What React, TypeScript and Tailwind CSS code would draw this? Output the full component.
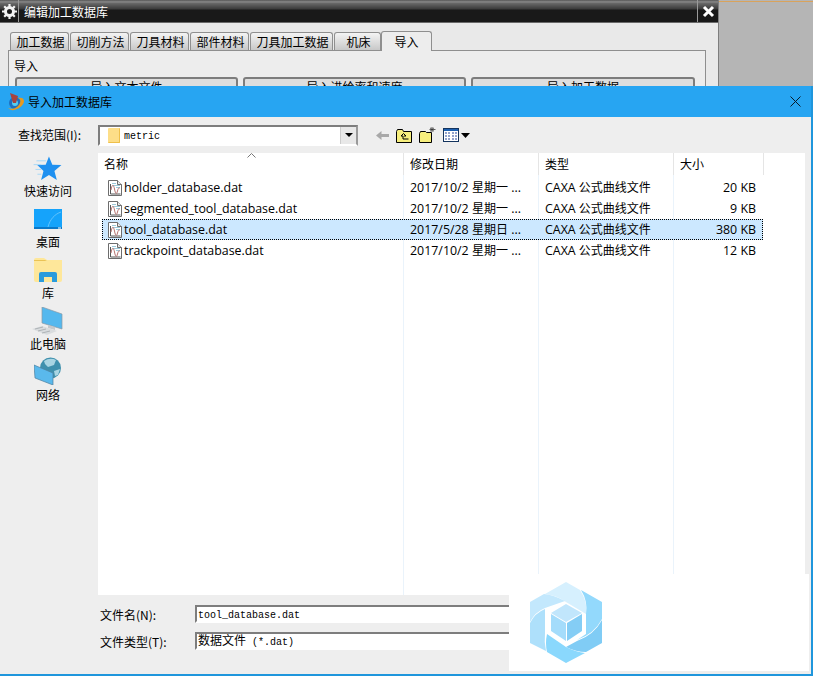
const cjk = "font-['Noto_Sans_CJK_SC','Noto_Sans',sans-serif]"
const ui = "font-['Open_Sans','Noto_Sans_CJK_SC',sans-serif]"
const mono = "font-['Liberation_Mono','Noto_Sans_CJK_SC',monospace]"

const tabs = [
    { label: "加工数据", w: "w-[59px]" },
    { label: "切削方法", w: "w-[59px]" },
    { label: "刀具材料", w: "w-[59px]" },
    { label: "部件材料", w: "w-[59px]" },
    { label: "刀具加工数据", w: "w-[83px]" },
    { label: "机床", w: "w-[47px]" },
]

const files = [
    { name: "holder_database.dat", date: "2017/10/2 ", day: "星期一", size: "20 KB" },
    { name: "segmented_tool_database.dat", date: "2017/10/2 ", day: "星期一", size: "9 KB" },
    { name: "tool_database.dat", date: "2017/5/28 ", day: "星期日", size: "380 KB", selected: true },
    { name: "trackpoint_database.dat", date: "2017/10/2 ", day: "星期一", size: "12 KB" },
]

function FileIcon() {
    return (
        <svg width="16" height="16" viewBox="0 0 16 16" className="shrink-0">
            <path d="M1.500.5h9l4 4v11h-13z" fill="#fff" stroke="#6d6d6d" />
            <path d="M10.500.5v4h4" fill="#e8e8e8" stroke="#6d6d6d" />
            <path d="M5 3.500h4M6 5.500h7M9 7.500h4" stroke="#9cc9d9" />
            <path d="M3.500 4v10h10" fill="none" stroke="#555" />
            <path d="M4 10c1-6 2.500-6 3.500-1s2 6 3 2 1.500-3 2.500-3" fill="none" stroke="#b5726f" />
        </svg>
    )
}

function GearIcon() {
    return (
        <svg width="15" height="15" viewBox="0 0 15 15">
            <circle cx="7.500" cy="7.500" r="4" fill="none" stroke="#f2f2f2" strokeWidth="3" />
            <path d="M7.500 0v3M7.500 12v3M0 7.500h3M12 7.500h3M2.200 2.200l2 2M10.800 10.800l2 2M12.800 2.200l-2 2M4.200 10.800l-2 2" stroke="#f2f2f2" strokeWidth="2.200" />
        </svg>
    )
}

function AppIcon() {
    return (
        <svg width="17" height="18" viewBox="0 0 17 18">
            <circle cx="8" cy="10" r="6" fill="#1f6fc0" />
            <circle cx="8" cy="10" r="3" fill="#58cdf0" />
            <path d="M3 0l8 3-2 7-3 0z" fill="#a8433f" />
            <path d="M1 15c4 2 10 0 12-5 1-3 0-4-2-5 3-1 6 0 6 3 0 5-8 10-13 9z" fill="#e99a1e" />
        </svg>
    )
}

function BackArrow() {
    return (
        <svg width="13" height="11" viewBox="0 0 13 11">
            <path d="M0 5.500 5.500 1v3H13v3H5.500v3z" fill="#a8a8a8" />
        </svg>
    )
}

function UpFolder() {
    return (
        <svg width="16" height="15" viewBox="0 0 16 15">
            <path d="M.5 3.500l1-2h5l1 2h8v11H.500z" fill="#f7ef7e" stroke="#000" />
            <path d="M7.500 5.500 5 8h2v3h5.500M7.500 5.500 10 8H8" fill="none" stroke="#000" />
        </svg>
    )
}

function NewFolder() {
    return (
        <svg width="17" height="16" viewBox="0 0 17 16">
            <path d="M.5 6.500l1-2h5l1 1h5v10H.500z" fill="#f7ef7e" stroke="#000" />
            <path d="M13 0v5M10.500 2.500h6M11 .8l4 3.500M15 .8l-4 3.500" stroke="#333" strokeWidth=".8" />
        </svg>
    )
}

function ViewIcon() {
    return (
        <svg width="27" height="14" viewBox="0 0 27 14">
            <rect x=".5" y=".5" width="15" height="13" fill="#fff" stroke="#14345e" />
            <rect x="1" y="1" width="14" height="2" fill="#1c5fb0" />
            <path d="M2 5h2M5 5h2M9 5h2M12 5h2M2 8h2M5 8h2M9 8h2M12 8h2M2 11h2M5 11h2M9 11h2M12 11h2" stroke="#26479b" />
            <path d="M18 5h9l-4.500 5z" fill="#000" />
        </svg>
    )
}

function StarIcon() {
    return (
        <svg width="30" height="24" viewBox="0 0 30 25">
            <path d="M16 .5l3.500 8.500 9.500.500-7.300 6 2.500 9.500-8.200-5.200-8.200 5.200 2.500-9.500-6.500-6 8.800-.500z" fill="#1e90f0" />
            <path d="M3 5h10M0 9h8M2 14h6M4 19h4" stroke="#a5d7f7" />
        </svg>
    )
}

function DesktopIcon() {
    return (
        <svg width="28" height="20" viewBox="0 0 28 20">
            <rect width="28" height="20" fill="#15a3fb" />
            <path d="M14 18C16 10 21 5 27 3" fill="none" stroke="#62c3fb" />
            <rect y="18" width="28" height="2" fill="#0a78c8" />
            <path d="M24 19h3" stroke="#fff" />
        </svg>
    )
}

function LibraryIcon() {
    return (
        <svg width="28" height="24" viewBox="0 0 28 24">
            <path d="M0 2q0-2 2-2h8l3 2h15v20q0 2-2 2H2q-2 0-2-2z" fill="#fee79a" />
            <path d="M0 2h11l2 1H0z" fill="#eac355" />
            <path d="M5 24v-8q0-2 2-2h14q2 0 2 2v8h-5v-5h-8v5z" fill="#2a9bdc" />
        </svg>
    )
}

function ComputerIcon() {
    return (
        <svg width="32" height="28" viewBox="0 0 32 28">
            <path d="M10 0l20 7v15L10 16z" fill="#54b8ee" stroke="#8b9aa5" strokeWidth=".7" />
            <path d="M16 18l7 2v3l-7-2z" fill="#c5c9cc" />
            <path d="M0 22l10-3 15 5-10 4z" fill="#d9dcde" />
            <path d="M3 22l8-2M6 24l8-2M10 26l8-2" stroke="#aeb3b6" />
        </svg>
    )
}

function NetworkIcon() {
    return (
        <svg width="28" height="28" viewBox="0 0 28 28">
            <circle cx="16.500" cy="11" r="10.500" fill="#3f90ad" />
            <path d="M10 4q6-4 12-1l-2 5-6 2-3-3zM20 14l6-2-2 6-3 1z" fill="#a9d5e3" />
            <path d="M0 8l19 8v12L1 21z" fill="#5ab9ec" stroke="#4e7f9f" strokeWidth=".7" />
        </svg>
    )
}

function Watermark() {
    return (
        <svg width="72" height="81" viewBox="0 0 72 81">
            <path d="M15 12 36 0l14 8q8 12 6 24L36 20q-10-7-21-8z" fill="#d6f0fe" />
            <path d="M51 8l21 12v17q-8 15-25 21l9-6V32q2-13-5-24z" fill="#93d9fc" />
            <path d="M72 38v23L56 70q-10 0-20-5l11-6q17-6 25-21z" fill="#80ccf5" />
            <path d="M17 52l19 13q10 5 19 6L36 81 17 70q-2-9 0-18z" fill="#8ad8fd" />
            <path d="M0 41q5-10 15-14v24q-1 9 1 18L0 61z" fill="#aee0fb" />
            <path d="M0 20l14-8q10 1 21 7L15 26Q5 30 0 40z" fill="#c3e8fd" />
            <path d="M36 22l16 9-16 9-15-9z" fill="#c1e6fc" />
            <path d="M21 32l15 9v18l-15-10z" fill="#a4dcfb" />
            <path d="M37 41l15-9v17l-15 10z" fill="#84cdf5" />
        </svg>
    )
}

function SideItem({ icon, label, gap }: { icon: React.ReactNode; label: string; gap: string }) {
    return (
        <div className="h-[51px] flex flex-col items-center justify-end">
            <div className={`flex items-end justify-center ${gap}`}>{icon}</div>
            <span className="text-xs leading-[18px]">{label}</span>
        </div>
    )
}

function TableRow({ file }: { file: (typeof files)[number] }) {
    return (
        <div className={`w-[661px] h-[21px] ml-1 flex items-center ${file.selected ? "bg-[#cce8ff] outline-1 outline-dotted outline-offset-[-1px] outline-black" : ""}`}>
            <div className="w-[302px] pl-[5px] flex items-center gap-px text-[12.4px]">
                <FileIcon />
                <span className="pt-[2px]">{file.name}</span>
            </div>
            <div className="w-[135px] pl-[6px] pt-[2px] text-[12.4px]">
                {file.date}
                <span className="text-xs">{file.day}</span> ...
            </div>
            <div className="w-[135px] pl-[6px] pt-[2px] text-[12.4px]">
                CAXA <span className="text-xs">公式曲线文件</span>
            </div>
            <div className="w-[89px] pr-[7px] pt-[2px] text-right text-[12.4px]">{file.size}</div>
        </div>
    )
}

export default function App() {
    return (
        <div className={`relative w-[813px] h-[676px] overflow-hidden bg-[#b5b5b5] text-black ${cjk}`}>
            <div className="absolute left-[719px] top-[1px] w-[94px] h-px bg-[#d9a35c]" />
            <div className="w-[719px] h-full bg-[#e9e9e9] border-r border-[#7e7e7e]">
                <div className="h-[23px] flex items-stretch border-b border-[#6a6a6a] bg-[linear-gradient(#555_0,#8c8c8c_2px,#6a6a6a_3px,#3a3a3a_9px,#191919_10px)]">
                    <div className="w-[19px] flex items-center justify-center border-r border-[#9a9a9a]">
                        <GearIcon />
                    </div>
                    <div className="flex-1 pl-[5px] text-xs leading-[23px] text-white">编辑加工数据库</div>
                    <div className="w-[21px] flex items-center justify-center border-l border-[#9a9a9a]">
                        <svg width="13" height="13" viewBox="0 0 13 13">
                            <path d="M2 2l9 9M11 2l-9 9" stroke="#fff" strokeWidth="3" />
                        </svg>
                    </div>
                </div>
                <div className="pl-[10px] pt-[8px] flex items-end h-[27px] text-xs">
                    {tabs.map((t) => (
                        <div
                            key={t.label}
                            className={`${t.w} h-[18px] mr-px pl-[2px] flex items-center justify-center rounded-t-[3px] border border-b-0 border-[#8f8f8f] bg-[linear-gradient(#f4f4f4,#c8c8c8)]`}
                        >
                            {t.label}
                        </div>
                    ))}
                    <div className="relative z-10 w-[51px] h-[20px] -mb-px -ml-px flex items-center justify-center rounded-t-[3px] border border-b-0 border-[#8f8f8f] bg-[#ededed]">
                        导入
                    </div>
                </div>
                <div className="ml-2 w-[698px] h-[200px] border border-[#8f8f8f] bg-[#ededed] pl-[5px] pr-[6px] pt-[6px] text-xs">
                    <div className="leading-[17px]">导入</div>
                    <div className="flex gap-[5px] pt-[3px] pl-px">
                        <div className="w-[223px] h-7 text-center rounded-[3px] border-2 border-[#7d7d7d] bg-[#dedede]">导入文本文件</div>
                        <div className="w-[223px] h-7 text-center rounded-[3px] border-2 border-[#7d7d7d] bg-[#dedede]">导入进给率和速度</div>
                        <div className="w-[224px] h-7 text-center rounded-[3px] border-2 border-[#7d7d7d] bg-[#dedede]">导入加工数据</div>
                    </div>
                </div>
            </div>

            <div className="absolute left-0 top-[86px] w-[813px] h-[590px] flex flex-col bg-[#eeeeee] border-r-2 border-b-2 border-[#1f96dc]">
                <div className="h-[31px] shrink-0 flex items-center bg-[#27a5f2] pl-[7px] pr-[10px] text-xs">
                    <AppIcon />
                    <span className="pl-[4px] flex-1">导入加工数据库</span>
                    <svg width="11" height="11" viewBox="0 0 11 11">
                        <path d="M.5.500l10 10M10.500.500l-10 10" stroke="#0a1a28" />
                    </svg>
                </div>
                <div className="h-[36px] shrink-0 flex items-center pl-[18px] text-xs">
                    <span className="w-[80px]">查找范围(I):</span>
                    <div className="w-[260px] h-[21px] flex items-center border-2 border-t-[#7d7d7d] border-l-[#7d7d7d] border-r-[#9a9a9a] border-b-white bg-white">
                        <div className="ml-2 w-3 h-[15px] rounded-[1px] bg-[#fdde88] border-r border-b border-[#efc04a]" />
                        <span className={`ml-1 pt-[3px] flex-1 text-[10px] ${mono}`}>metric</span>
                        <div className="w-4 h-full flex items-center justify-center bg-[#e8e8e8] border-l border-[#ccc]">
                            <div className="w-0 h-0 border-x-[4px] border-t-[4px] border-x-transparent border-t-black" />
                        </div>
                    </div>
                    <div className="flex items-center pl-[18px] gap-[7px]">
                        <BackArrow />
                        <UpFolder />
                        <NewFolder />
                        <ViewIcon />
                    </div>
                </div>
                <div className="h-[442px] shrink-0 flex">
                    <div className="w-[98px] shrink-0 pr-[2px]">
                        <div className="-mt-[4px]">
                            <SideItem icon={<StarIcon />} label="快速访问" gap="mb-[2px]" />
                            <SideItem icon={<DesktopIcon />} label="桌面" gap="mb-[4px]" />
                            <SideItem icon={<LibraryIcon />} label="库" gap="mb-[2px]" />
                            <SideItem icon={<ComputerIcon />} label="此电脑" gap="mb-0" />
                            <SideItem icon={<NetworkIcon />} label="网络" gap="mb-px" />
                        </div>
                    </div>
                    <div className={`relative w-[707px] bg-white text-xs ${ui}`}>
                        <div className="relative h-[22px] flex items-center leading-[24px]">
                            <div className="w-[306px] pl-[6px] border-r border-[#e5e5e5] h-full">名称</div>
                            <div className="w-[135px] pl-[6px] border-r border-[#e5e5e5] h-full">修改日期</div>
                            <div className="w-[135px] pl-[6px] border-r border-[#e5e5e5] h-full">类型</div>
                            <div className="w-[90px] pl-[6px] border-r border-[#e5e5e5] h-full">大小</div>
                            <svg width="9" height="5" viewBox="0 0 9 5" className="absolute left-[149px] top-0">
                                <path d="M.5 4.500l4-4 4 4" fill="none" stroke="#777" />
                            </svg>
                        </div>
                        <div className="flex absolute left-0 top-[22px] bottom-0">
                            <div className="w-[306px] border-r border-[#eaf3fb]" />
                            <div className="w-[135px] border-r border-[#eaf3fb]" />
                            <div className="w-[135px] border-r border-[#eaf3fb]" />
                        </div>
                        <div className="relative pt-[2px]">
                            {files.map((f) => (
                                <TableRow key={f.name} file={f} />
                            ))}
                        </div>
                    </div>
                </div>
                <div className="flex-1 pt-[10px] pl-[100px] text-xs">
                    <div className="h-[27px] flex items-start">
                        <span className="w-[95px] leading-[20px]">文件名(N):</span>
                        <div className={`w-[320px] h-[18px] pl-px bg-white border-2 border-t-[#7d7d7d] border-l-[#7d7d7d] border-r-white border-b-white text-[10px] leading-[18px] ${mono}`}>
                            tool_database.dat
                        </div>
                    </div>
                    <div className="h-[27px] flex items-start">
                        <span className="w-[95px] leading-[20px]">文件类型(T):</span>
                        <div className={`w-[320px] h-[18px] pl-px bg-white border-2 border-t-[#7d7d7d] border-l-[#7d7d7d] border-r-white border-b-white text-[10px] leading-[18px] ${mono}`}>
                            <span className="text-xs">数据文件</span> (*.dat)
                        </div>
                    </div>
                </div>
            </div>

            <div className="absolute left-[509px] top-[574px] w-[300px] h-[97px] bg-white pl-[21px] pt-2">
                <Watermark />
            </div>
        </div>
    )
}
